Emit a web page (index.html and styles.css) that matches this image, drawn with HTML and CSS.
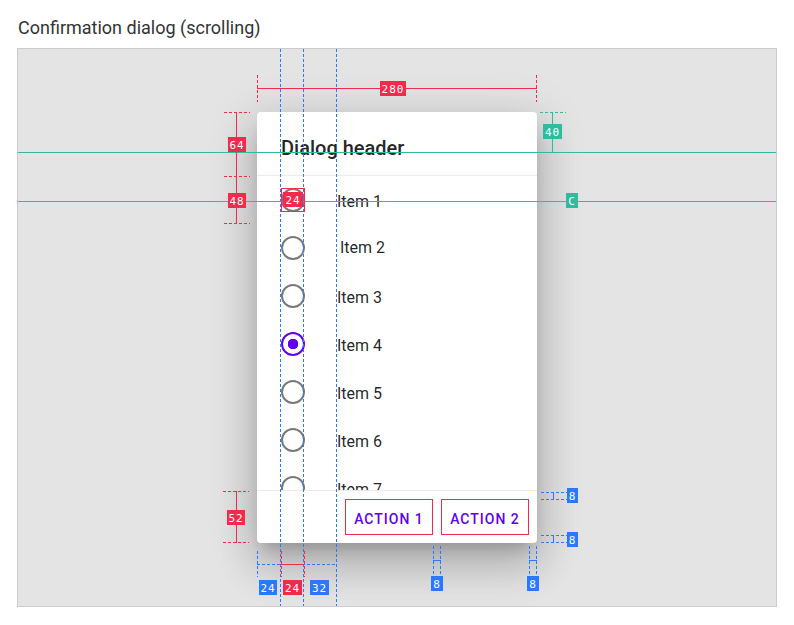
FILE: index.html
```html
<!DOCTYPE html>
<html lang="en">
<head>
    <meta charset="UTF-8">
    <meta name="viewport" content="width=device-width, initial-scale=1.0">
    <title>Confirmation dialog (scrolling)</title>
    <link rel="stylesheet" href="styles.css">
</head>
<body>
    <h1 class="page-title">Confirmation dialog (scrolling)</h1>

    <div class="canvas">
        <!-- Dialog -->
        <div class="dialog">
            <h2 class="dialog-title">Dialog header</h2>
            <div class="dialog-list">
                <div class="item"><span class="radio"></span><span class="item-label">Item 1</span></div>
                <div class="item"><span class="radio"></span><span class="item-label item-label--nudge">Item 2</span></div>
                <div class="item"><span class="radio"></span><span class="item-label">Item 3</span></div>
                <div class="item"><span class="radio radio--checked"></span><span class="item-label">Item 4</span></div>
                <div class="item"><span class="radio"></span><span class="item-label">Item 5</span></div>
                <div class="item"><span class="radio"></span><span class="item-label">Item 6</span></div>
                <div class="item"><span class="radio"></span><span class="item-label">Item 7</span></div>
            </div>
            <div class="dialog-actions">
                <button class="btn">Action 1</button>
                <button class="btn">Action 2</button>
            </div>
        </div>

        <!-- Redline annotations (page coordinates) -->
        <svg class="redlines" viewBox="18 49 758 557" width="758" height="557">
            <g class="guide-blue">
                <line x1="280.5" y1="49" x2="280.5" y2="606"/>
                <line x1="303.5" y1="49" x2="303.5" y2="606"/>
                <line x1="336.5" y1="49" x2="336.5" y2="606"/>
            </g>
            <g class="guide-teal">
                <line x1="18" y1="152.5" x2="776" y2="152.5"/>
                <line x1="18" y1="201.5" x2="776" y2="201.5"/>
            </g>

            <!-- 280 width -->
            <line class="red" x1="257" y1="88.5" x2="537" y2="88.5"/>
            <line class="red dash" x1="257.5" y1="75" x2="257.5" y2="102"/>
            <line class="red dash" x1="536.5" y1="75" x2="536.5" y2="102"/>

            <!-- 64 / 48 -->
            <line class="red" x1="236.5" y1="112" x2="236.5" y2="224"/>
            <line class="red dash" x1="224" y1="112.5" x2="250" y2="112.5"/>
            <line class="red dash" x1="224" y1="176.5" x2="250" y2="176.5"/>
            <line class="red dash" x1="224" y1="223.5" x2="250" y2="223.5"/>

            <!-- 24 radio box -->
            <rect class="red-box" x="281.5" y="188.5" width="23" height="23"/>

            <!-- 40 / C -->
            <line class="teal" x1="552.5" y1="112" x2="552.5" y2="152"/>
            <line class="teal dash" x1="540" y1="112.5" x2="566" y2="112.5"/>
            <line class="teal dash" x1="540" y1="152.5" x2="566" y2="152.5"/>
            <line class="teal dash" x1="540" y1="201.5" x2="566" y2="201.5"/>

            <!-- 52 footer -->
            <line class="red" x1="236.5" y1="491" x2="236.5" y2="543"/>
            <line class="red dash" x1="223" y1="491.5" x2="249" y2="491.5"/>
            <line class="red dash" x1="223" y1="542.5" x2="249" y2="542.5"/>

            <!-- right 8s -->
            <line class="blue dash" x1="541" y1="492.5" x2="567" y2="492.5"/>
            <line class="blue dash" x1="541" y1="499.5" x2="567" y2="499.5"/>
            <line class="blue" x1="553.5" y1="492" x2="553.5" y2="500"/>
            <line class="blue dash" x1="541" y1="535.5" x2="567" y2="535.5"/>
            <line class="blue dash" x1="541" y1="542.5" x2="567" y2="542.5"/>
            <line class="blue" x1="553.5" y1="535" x2="553.5" y2="543"/>

            <!-- bottom 8s -->
            <line class="blue dash" x1="433.5" y1="546" x2="433.5" y2="574"/>
            <line class="blue dash" x1="440.5" y1="546" x2="440.5" y2="574"/>
            <line class="blue" x1="433" y1="560.5" x2="441" y2="560.5"/>
            <line class="blue dash" x1="529.5" y1="546" x2="529.5" y2="574"/>
            <line class="blue dash" x1="536.5" y1="546" x2="536.5" y2="574"/>
            <line class="blue" x1="529" y1="560.5" x2="537" y2="560.5"/>

            <!-- 24 / 24 / 32 -->
            <line class="blue dash" x1="257" y1="564.5" x2="337" y2="564.5"/>
            <line class="red" x1="281" y1="564.5" x2="304" y2="564.5"/>
            <line class="blue dash" x1="257.5" y1="551" x2="257.5" y2="577"/>
            <line class="red dash" x1="281.5" y1="551" x2="281.5" y2="577"/>
            <line class="red dash" x1="304.5" y1="551" x2="304.5" y2="577"/>

            <!-- labels -->
            <g class="tag tag-red">
                <rect x="380" y="81" width="26" height="15"/><text x="393" y="92.5">280</text>
                <rect x="228" y="137" width="18" height="15"/><text x="237" y="148.5">64</text>
                <rect x="228" y="193" width="18" height="15"/><text x="237" y="204.5">48</text>
                <rect x="283" y="192" width="20" height="15"/><text x="293" y="203.5">24</text>
                <rect x="227" y="510" width="18" height="15"/><text x="236" y="521.5">52</text>
                <rect x="283" y="580" width="19" height="15"/><text x="292.5" y="591.5">24</text>
            </g>
            <g class="tag tag-teal">
                <rect x="543" y="124" width="19" height="15"/><text x="552.5" y="135.5">40</text>
                <rect x="566" y="193" width="12" height="15"/><text x="572" y="204.5">C</text>
            </g>
            <g class="tag tag-blue">
                <rect x="567" y="488" width="11" height="15"/><text x="572.5" y="499.5">8</text>
                <rect x="567" y="532" width="11" height="15"/><text x="572.5" y="543.5">8</text>
                <rect x="431" y="576" width="12" height="15"/><text x="437" y="587.5">8</text>
                <rect x="527" y="576" width="12" height="15"/><text x="533" y="587.5">8</text>
                <rect x="259" y="580" width="18" height="15"/><text x="268" y="591.5">24</text>
                <rect x="310" y="580" width="19" height="15"/><text x="319.5" y="591.5">32</text>
            </g>
        </svg>
    </div>
</body>
</html>
```

FILE: styles.css
```css
* {
    box-sizing: border-box;
}
body {
    margin: 0;
    padding: 16px 17px 0;
    font-family: Roboto, 'Noto Sans', sans-serif;
    background-color: #fff;
}
.page-title {
    margin: 0 0 8px 1px;
    font-size: 18px;
    font-weight: 400;
    line-height: 24px;
    color: #333;
}
.canvas {
    position: relative;
    height: 559px;
    display: flex;
    align-items: center;
    justify-content: center;
    background-color: #e4e4e4;
    border: 1px solid #cccccc;
}
.dialog {
    width: 280px;
    background-color: #fff;
    border-radius: 4px;
    box-shadow: 0 11px 15px -7px rgba(0,0,0,0.2), 0 24px 38px 3px rgba(0,0,0,0.14), 0 9px 46px 8px rgba(0,0,0,0.12);
}
.dialog-title {
    margin: 0;
    height: 64px;
    padding: 20px 24px 0;
    font-size: 20px;
    font-weight: 500;
    line-height: 32px;
    color: rgba(0,0,0,0.87);
    border-bottom: 1px solid #ebebeb;
}
.dialog-list {
    height: 315px;
    overflow: hidden;
    border-bottom: 1px solid #ebebeb;
}
.item {
    height: 48px;
    display: flex;
    align-items: center;
    padding-left: 24px;
}
.radio {
    flex: none;
    width: 24px;
    height: 24px;
    display: flex;
    align-items: center;
    justify-content: center;
}
.radio::before {
    content: "";
    width: 20px;
    height: 20px;
    border: 2px solid #7a7a7a;
    border-radius: 50%;
}
.radio--checked::before {
    border-color: #6200ee;
    background: radial-gradient(circle, #6200ee 0 5px, transparent 5.5px);
}
.item-label {
    margin-left: 32px;
    padding-top: 2px;
    font-size: 16px;
    color: rgba(0,0,0,0.87);
}
.item-label--nudge {
    transform: translate(3px, -2px);
}
.dialog-actions {
    height: 52px;
    padding: 8px;
    display: flex;
    justify-content: flex-end;
    gap: 8px;
}
.btn {
    min-width: 88px;
    height: 36px;
    padding: 3px 8px 0;
    background: transparent;
    border: 1px solid #f42a4d;
    font-family: Roboto, sans-serif;
    font-size: 14px;
    font-weight: 500;
    line-height: 20px;
    letter-spacing: 1px;
    text-transform: uppercase;
    color: #6200ee;
}

/* redline overlay */
.redlines {
    position: absolute;
    top: 0;
    left: 0;
    pointer-events: none;
}
.redlines line {
    stroke-width: 1;
    fill: none;
}
.guide-blue line,
.blue {
    stroke: #2979ff;
}
.guide-blue line {
    stroke-dasharray: 3 2;
}
.guide-teal line,
.teal {
    stroke: #2dbd9e;
}
.red {
    stroke: #f42a4d;
}
.dash {
    stroke-dasharray: 3 2;
}
.red-box {
    fill: none;
    stroke: #f42a4d;
}
.tag text {
    fill: #fff;
    font-family: 'DejaVu Sans Mono', 'Liberation Mono', monospace;
    font-size: 11px;
    letter-spacing: 1px;
    text-anchor: middle;
}
.tag-red rect {
    fill: #f42a4d;
}
.tag-teal rect {
    fill: #2dbd9e;
}
.tag-blue rect {
    fill: #2979ff;
}
```
